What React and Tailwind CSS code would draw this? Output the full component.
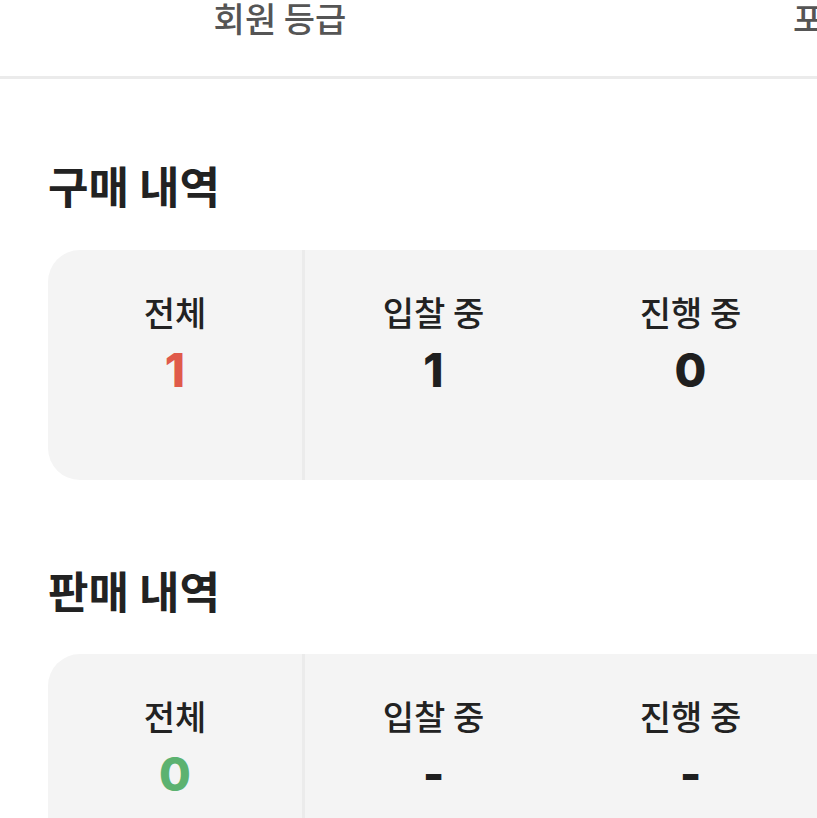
import React from "react";

const ko = { fontFamily: '"Noto Sans CJK KR", "Noto Sans", sans-serif' };
const num = { fontFamily: 'Inter, "Noto Sans CJK KR", sans-serif' };

const Stat = ({ label, value, color, first }) => (
    <div
        className={`flex flex-col items-center pt-[40px] shrink-0 w-[257px] ${first ? "border-r-[3px] border-[#ebebeb]" : ""}`}
    >
        <p className="text-[34px] leading-[1.3] font-medium text-[#222]" style={ko}>{label}</p>
        <p className={`mt-[13px] text-[46px] leading-none font-extrabold ${color}`} style={num}>{value}</p>
    </div>
);

const Section = ({ title, stats, top }) => (
    <section className={top}>
        <h2 className="ml-[48px] text-[44px] leading-[1.4] font-bold text-[#222]" style={ko}>{title}</h2>
        <div className="mt-[33px] ml-[48px] h-[230px] bg-[#f4f4f4] rounded-l-[32px] flex overflow-hidden">
            {stats.map((s, i) => <Stat key={s.label} {...s} first={i === 0} />)}
        </div>
    </section>
);

const App = () => {
    const buy = [
        { label: "전체", value: "1", color: "text-[#e05a4a]" },
        { label: "입찰 중", value: "1", color: "text-[#1f1f1f]" },
        { label: "진행 중", value: "0", color: "text-[#1f1f1f]" },
        { label: "종료", value: "0", color: "text-[#1f1f1f]" },
    ];
    const sell = [
        { label: "전체", value: "0", color: "text-[#5cb270]" },
        { label: "입찰 중", value: "-", color: "text-[#1f1f1f]" },
        { label: "진행 중", value: "-", color: "text-[#1f1f1f]" },
        { label: "종료", value: "-", color: "text-[#1f1f1f]" },
    ];
    return (
        <div className="w-[817px] h-[818px] overflow-hidden bg-white">
            <nav className="flex h-[79px] border-b-[3px] border-[#ebebeb]">
                <div className="w-[560px] shrink-0 text-center">
                    <span className="text-[34px] leading-[36px] font-medium text-[#555]" style={ko}>회원 등급</span>
                </div>
                <div className="w-[560px] shrink-0 text-center">
                    <span className="text-[34px] leading-[36px] font-medium text-[#555]" style={ko}>포인트</span>
                </div>
            </nav>
            <Section title="구매 내역" stats={buy} top="pt-[76px]" />
            <Section title="판매 내역" stats={sell} top="pt-[80px]" />
        </div>
    );
};

export default App;
